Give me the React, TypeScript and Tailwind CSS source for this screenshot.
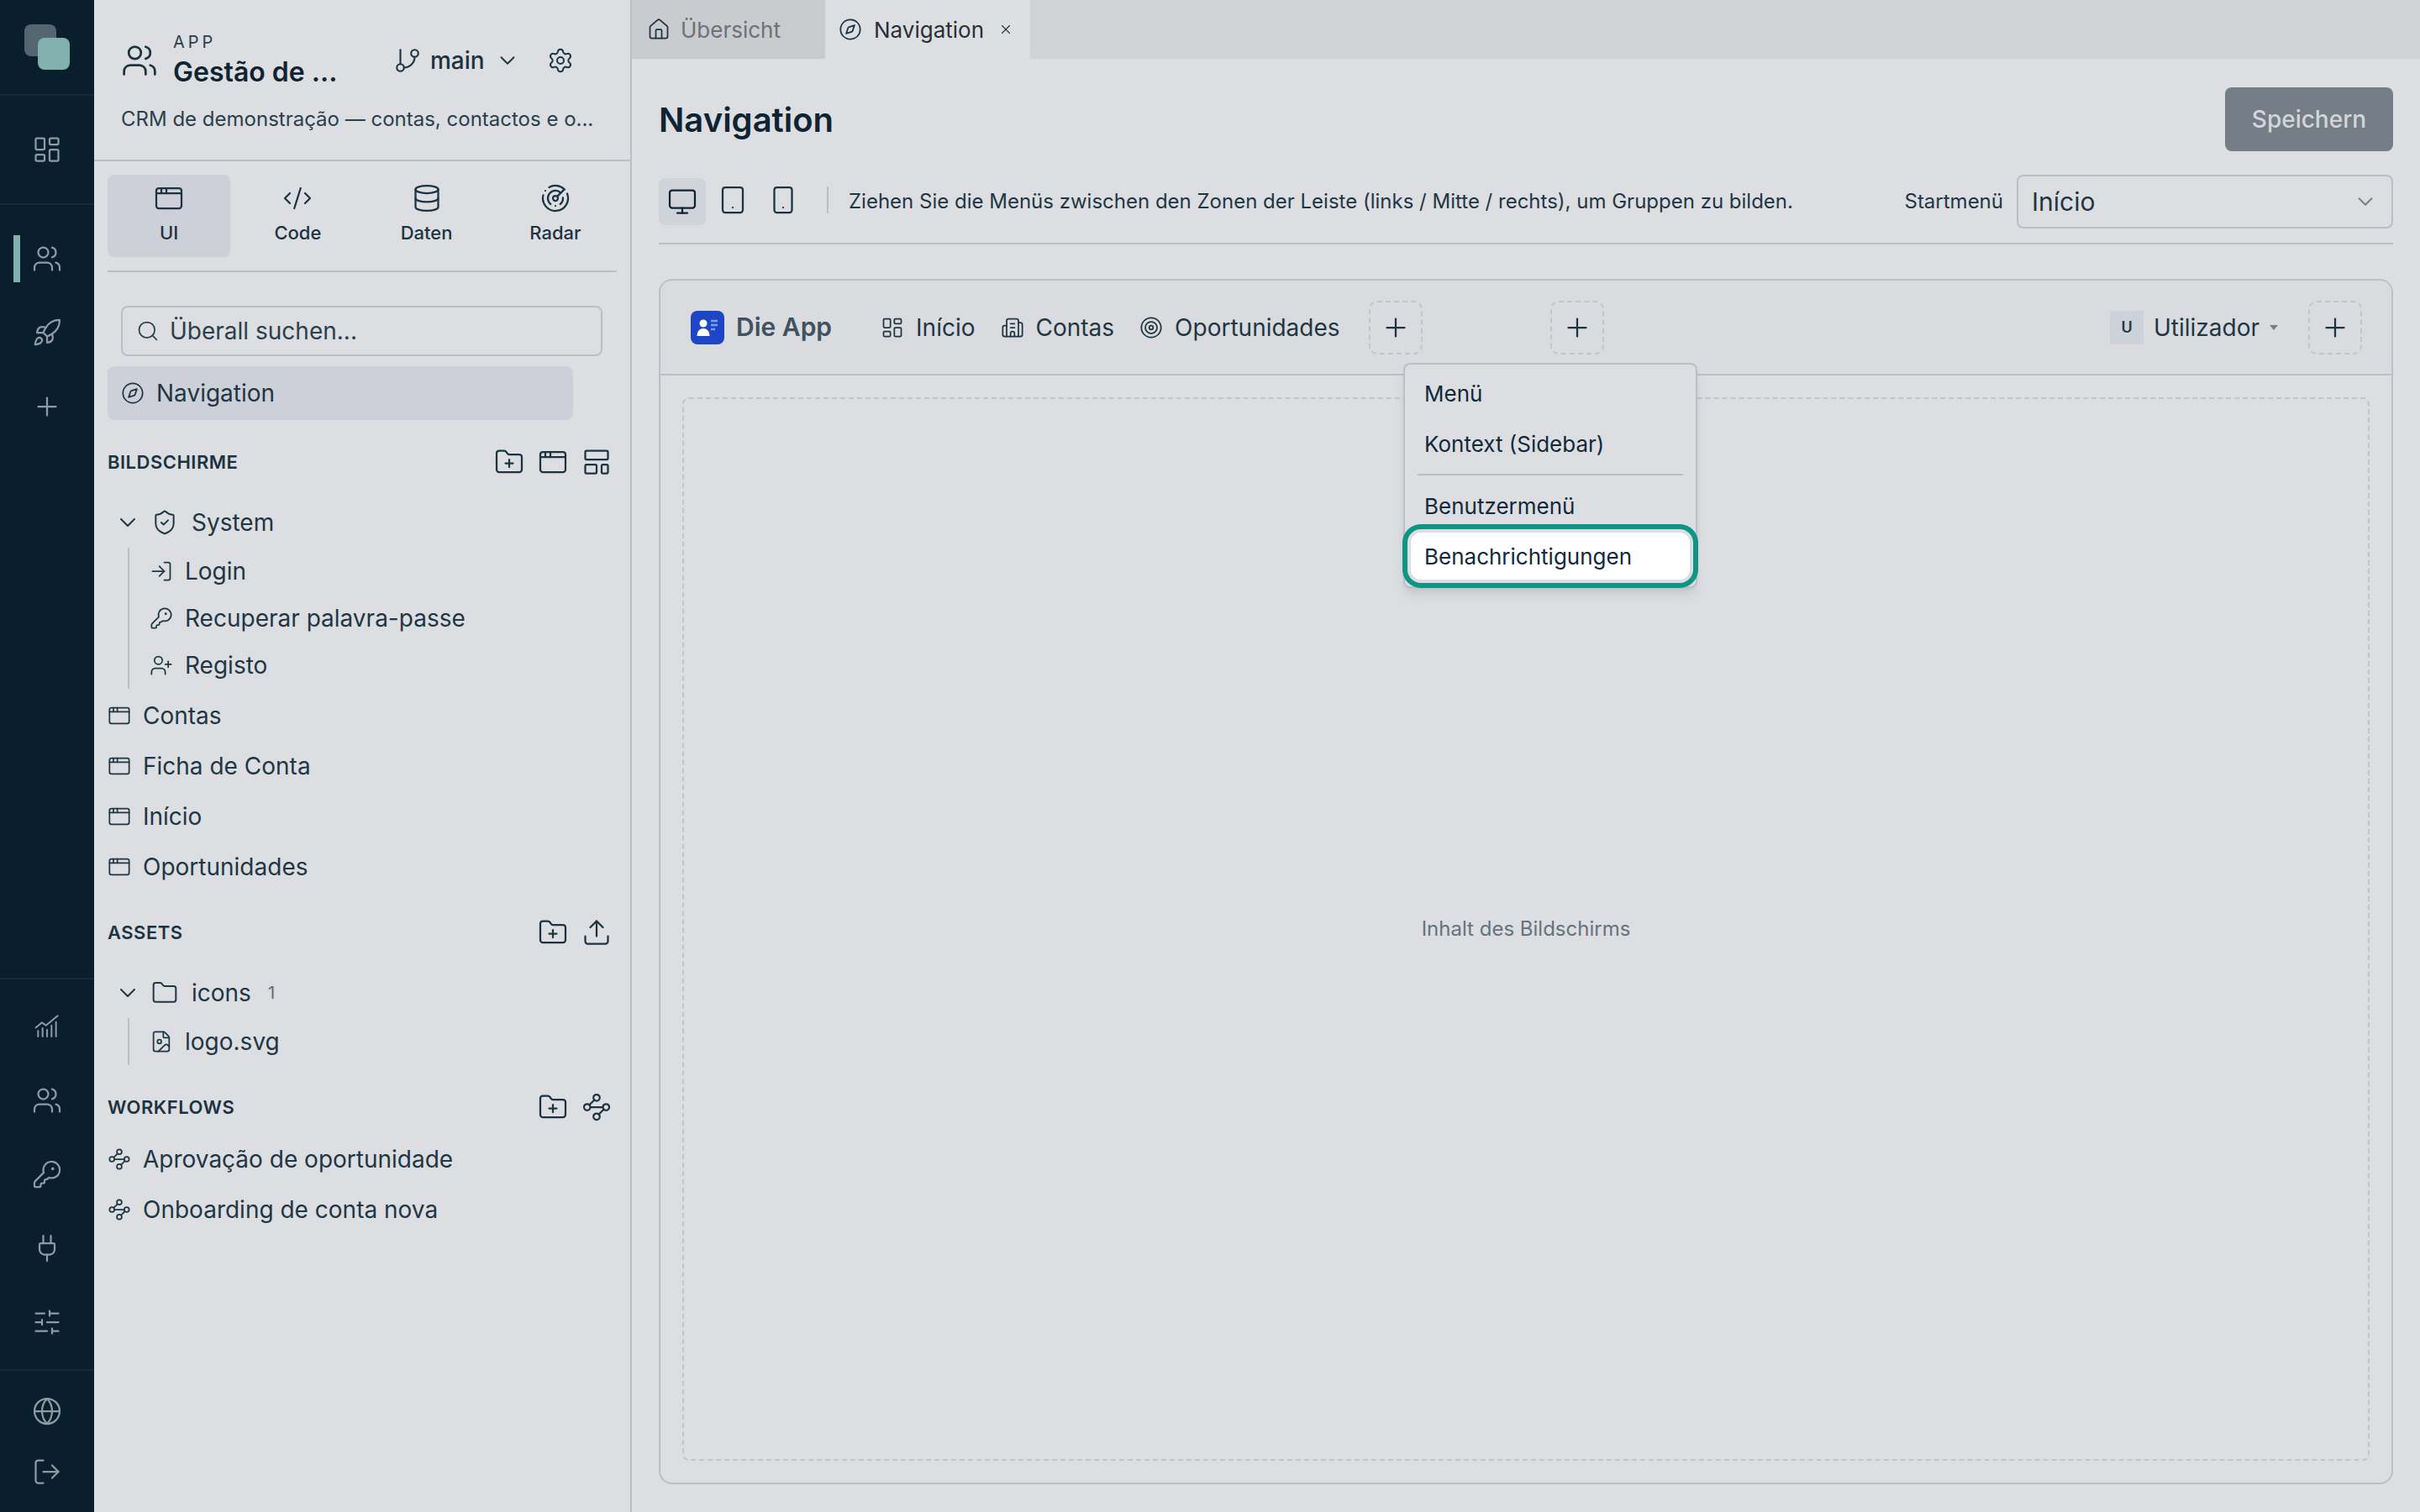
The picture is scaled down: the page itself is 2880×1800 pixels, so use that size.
import {
  AppWindow,
  Building2,
  ChevronDown,
  CodeXml,
  Compass,
  Database,
  FileImage,
  Folder,
  FolderPlus,
  GitBranch,
  Globe,
  House,
  KeyRound,
  LayoutDashboard,
  LayoutTemplate,
  LogIn,
  LogOut,
  Monitor,
  Plug,
  Plus,
  Radar,
  Rocket,
  Search,
  Settings,
  ShieldCheck,
  SlidersHorizontal,
  Smartphone,
  Tablet,
  Target,
  Upload,
  UserPlus,
  Users,
  Waypoints,
  X,
} from 'lucide-react';
import type { ReactNode } from 'react';

const RailItem = ({ children, className }: { children: ReactNode; className: string }) => (
  <div className={`flex items-center justify-center text-[#8f9aa2] ${className}`}>{children}</div>
);

const ChartIcon = () => (
  <svg width="32" height="32" viewBox="0 0 24 24" fill="none" stroke="currentColor" strokeWidth="1.5" strokeLinecap="round" strokeLinejoin="round">
    <path d="M2 13 L7.5 8.5 L11 11 L21.5 2.5" />
    <path d="M4 16v5M8 13.5V21M12 15v6M16 11v10M20 8v13" />
  </svg>
);

const Rail = () => (
  <aside className="w-[112px] shrink-0 h-full bg-[#0a1f2e] flex flex-col">
    <div className="h-[114px] shrink-0 border-b-2 border-[#152b39] pt-[29px] pl-[29px]">
      <div className="relative w-[53px] h-[54px]">
        <div className="w-[38px] h-[38px] rounded-[8px] bg-[#566670]" />
        <div className="absolute left-[16px] top-[16px] w-[38px] h-[38px] rounded-[8px] bg-[#82b1ad]" />
      </div>
    </div>
    <div className="h-[130px] shrink-0 border-b-2 border-[#152b39] flex items-center justify-center text-[#8f9aa2]">
      <LayoutDashboard size={36} strokeWidth={1.5} />
    </div>
    <div className="relative pt-[20px] flex flex-col">
      <div className="absolute left-[16px] top-[36px] w-[8px] h-[56px] bg-[#7fb2ae]" />
      <RailItem className="h-[88px]"><Users size={36} strokeWidth={1.5} /></RailItem>
      <RailItem className="h-[88px]"><Rocket size={36} strokeWidth={1.5} /></RailItem>
      <RailItem className="h-[88px]"><Plus size={36} strokeWidth={1.5} /></RailItem>
    </div>
    <div className="mt-auto border-t-2 border-[#152b39] pt-[12px] pb-[12px] flex flex-col">
      <RailItem className="h-[88px]"><ChartIcon /></RailItem>
      <RailItem className="h-[88px]"><Users size={36} strokeWidth={1.5} /></RailItem>
      <RailItem className="h-[88px]"><KeyRound size={36} strokeWidth={1.5} /></RailItem>
      <RailItem className="h-[88px]"><Plug size={36} strokeWidth={1.5} /></RailItem>
      <RailItem className="h-[88px]"><SlidersHorizontal size={36} strokeWidth={1.5} /></RailItem>
    </div>
    <div className="border-t-2 border-[#152b39] pt-[12px] pb-[12px] flex flex-col">
      <RailItem className="h-[72px]"><Globe size={36} strokeWidth={1.5} /></RailItem>
      <RailItem className="h-[72px]"><LogOut size={36} strokeWidth={1.5} /></RailItem>
    </div>
  </aside>
);

const SubTab = ({ icon, label, active }: { icon: ReactNode; label: string; active?: boolean }) => (
  <div className={`flex-1 h-[98px] rounded-[8px] flex flex-col items-center pt-[10px] gap-[8px] text-[#1c3342] ${active ? 'bg-[#cdd0d8]' : ''}`}>
    {icon}
    <span className="text-[22px] leading-[30px] font-medium">{label}</span>
  </div>
);

const SectionHead = ({ label, children }: { label: string; children: ReactNode }) => (
  <div className="h-[40px] pl-[16px] pr-[22px] flex items-center justify-between">
    <span className="text-[22px] font-semibold tracking-[0.5px] text-[#1c3342]">{label}</span>
    <div className="flex items-center gap-[16px] text-[#1c3342]">{children}</div>
  </div>
);

const TreeRow = ({ icon, label, className }: { icon: ReactNode; label: string; className: string }) => (
  <div className={`flex items-center gap-[14px] pl-[16px] text-[28px] text-[#1f3644] ${className}`}>
    {icon}
    <span>{label}</span>
  </div>
);

const SubRow = ({ icon, label }: { icon: ReactNode; label: string }) => (
  <div className="h-[56px] flex items-center gap-[14px] pl-[24px] text-[28px] text-[#1f3644]">
    {icon}
    <span>{label}</span>
  </div>
);

const Sidebar = () => (
  <aside className="w-[640px] shrink-0 h-full border-r-2 border-[#b9c1c8] bg-[#dcdee2] flex flex-col">
    <div className="h-[192px] shrink-0 border-b-2 border-[#b9c1c8] pl-[32px] pr-[32px]">
      <div className="flex items-center h-[116px] pt-[28px]">
        <Users size={44} strokeWidth={1.5} className="text-[#1c3342] shrink-0" />
        <div className="ml-[18px] w-[240px]">
          <div className="text-[20px] leading-[24px] tracking-[0.2em] text-[#2b3f4c]">APP</div>
          <div className="text-[32px] leading-[40px] font-semibold text-[#0f2433] mt-[4px]">Gestão de ...</div>
        </div>
        <GitBranch size={34} strokeWidth={1.5} className="text-[#1c3342] ml-[22px]" />
        <span className="ml-[10px] text-[28px] font-medium text-[#1c3342]">main</span>
        <ChevronDown size={30} strokeWidth={1.5} className="ml-[12px] text-[#1c3342]" />
        <Settings size={32} strokeWidth={1.5} className="ml-[32px] text-[#1c3342]" />
      </div>
      <div className="mt-[10px] text-[24px] leading-[32px] text-[#2b3f4c] whitespace-nowrap">
        CRM de demonstração — contas, contactos e o...
      </div>
    </div>
    <div className="mx-[16px] h-[132px] shrink-0 border-b-2 border-[#b9c1c8] pt-[16px]">
      <div className="flex gap-[7px]">
        <SubTab active icon={<AppWindow size={36} strokeWidth={1.5} />} label="UI" />
        <SubTab icon={<CodeXml size={36} strokeWidth={1.5} />} label="Code" />
        <SubTab icon={<Database size={36} strokeWidth={1.5} />} label="Daten" />
        <SubTab icon={<Radar size={36} strokeWidth={1.5} />} label="Radar" />
      </div>
    </div>
    <div className="mt-[40px] ml-[32px] w-[573px] h-[60px] rounded-[8px] border-2 border-[#b9c1c8] flex items-center pl-[16px] gap-[12px] text-[28px] text-[#2b3f4c]">
      <Search size={28} strokeWidth={1.5} />
      <span>Überall suchen...</span>
    </div>
    <div className="mt-[12px] ml-[16px] w-[554px] h-[64px] rounded-[8px] bg-[#cdd0d8] flex items-center pl-[16px] gap-[14px] text-[28px] text-[#1f3644]">
      <Compass size={28} strokeWidth={1.5} />
      <span>Navigation</span>
    </div>
    <div className="mt-[30px]">
      <SectionHead label="BILDSCHIRME">
        <FolderPlus size={36} strokeWidth={1.5} />
        <AppWindow size={36} strokeWidth={1.5} />
        <LayoutTemplate size={36} strokeWidth={1.5} />
      </SectionHead>
    </div>
    <div className="mt-[22px] h-[60px] flex items-center pl-[24px] text-[28px] text-[#1f3644]">
      <ChevronDown size={32} strokeWidth={1.5} />
      <ShieldCheck size={32} strokeWidth={1.5} className="ml-[12px]" />
      <span className="ml-[16px]">System</span>
    </div>
    <div className="ml-[40px] border-l-2 border-[#b9c1c8] h-[168px]">
      <SubRow icon={<LogIn size={28} strokeWidth={1.5} />} label="Login" />
      <SubRow icon={<KeyRound size={28} strokeWidth={1.5} />} label="Recuperar palavra-passe" />
      <SubRow icon={<UserPlus size={28} strokeWidth={1.5} />} label="Registo" />
    </div>
    <div className="mt-[2px]">
      <TreeRow className="h-[60px]" icon={<AppWindow size={28} strokeWidth={1.5} />} label="Contas" />
      <TreeRow className="h-[60px]" icon={<AppWindow size={28} strokeWidth={1.5} />} label="Ficha de Conta" />
      <TreeRow className="h-[60px]" icon={<AppWindow size={28} strokeWidth={1.5} />} label="Início" />
      <TreeRow className="h-[60px]" icon={<AppWindow size={28} strokeWidth={1.5} />} label="Oportunidades" />
    </div>
    <div className="mt-[28px]">
      <SectionHead label="ASSETS">
        <FolderPlus size={36} strokeWidth={1.5} />
        <Upload size={36} strokeWidth={1.5} />
      </SectionHead>
    </div>
    <div className="mt-[22px] h-[60px] flex items-center pl-[24px] text-[28px] text-[#1f3644]">
      <ChevronDown size={32} strokeWidth={1.5} />
      <Folder size={32} strokeWidth={1.5} className="ml-[12px]" />
      <span className="ml-[16px]">icons</span>
      <span className="ml-[20px] text-[20px] text-[#5b6b76]">1</span>
    </div>
    <div className="ml-[40px] border-l-2 border-[#b9c1c8] h-[56px]">
      <SubRow icon={<FileImage size={28} strokeWidth={1.5} />} label="logo.svg" />
    </div>
    <div className="mt-[30px]">
      <SectionHead label="WORKFLOWS">
        <FolderPlus size={36} strokeWidth={1.5} />
        <Waypoints size={36} strokeWidth={1.5} />
      </SectionHead>
    </div>
    <div className="mt-[12px]">
      <TreeRow className="h-[60px]" icon={<Waypoints size={28} strokeWidth={1.5} />} label="Aprovação de oportunidade" />
      <TreeRow className="h-[60px]" icon={<Waypoints size={28} strokeWidth={1.5} />} label="Onboarding de conta nova" />
    </div>
  </aside>
);

const DashedPlus = () => (
  <div className="w-[64px] h-[64px] shrink-0 rounded-[10px] border-2 border-dashed border-[#c0c5cb] flex items-center justify-center text-[#1c3342]">
    <Plus size={36} strokeWidth={1.5} />
  </div>
);

const MenuItem = ({ label }: { label: string }) => (
  <div className="h-[56px] px-[16px] flex items-center text-[26px] text-[#13293a]">{label}</div>
);

const AddMenu = () => (
  <div className="absolute left-[884px] top-[98px] w-[350px] h-[268px] rounded-[8px] border-2 border-[#b9c1c8] bg-[#dcdee2] shadow-lg px-[7px] pt-[6px]">
    <div className="flex flex-col gap-[4px]">
      <MenuItem label="Menü" />
      <MenuItem label="Kontext (Sidebar)" />
    </div>
    <div className="h-[2px] mx-[8px] my-[8px] bg-[#b9c1c8]" />
    <div className="flex flex-col gap-[4px]">
      <MenuItem label="Benutzermenü" />
      <div className="h-[56px] px-[16px] flex items-center text-[26px] text-[#13293a] rounded-[12px] bg-white shadow-[0_0_0_4px_#dcdee2,0_0_0_10px_#0e9586]">
        Benachrichtigungen
      </div>
    </div>
  </div>
);

const ContactIcon = () => (
  <div className="w-[40px] h-[40px] rounded-[8px] bg-[#1d45c4] flex items-center justify-center">
    <svg width="32" height="32" viewBox="0 0 32 32" fill="none">
      <circle cx="11" cy="11" r="4.5" fill="#ffffff" />
      <path d="M3.5 26c0-6 3.5-9 7.5-9s7.5 3 7.5 9z" fill="#ffffff" />
      <path d="M20 8h8M20 13h8M20 18h5" stroke="#7aa0ee" strokeWidth="2.4" />
    </svg>
  </div>
);

const NavEntry = ({ icon, label }: { icon: ReactNode; label: string }) => (
  <div className="flex items-center gap-[14px] text-[28px] text-[#1f3644]">
    {icon}
    <span>{label}</span>
  </div>
);

const Main = () => (
  <main className="flex-1 min-w-0 h-full bg-[#dcdee2] flex flex-col">
    <div className="h-[70px] shrink-0 bg-[#d1d3d7] flex">
      <div className="w-[230px] bg-[#c9cbcf] flex items-center pl-[18px] gap-[12px] text-[26px] text-[#6c7278]">
        <House size={28} strokeWidth={1.5} className="text-[#1c3342]" />
        <span>Übersicht</span>
      </div>
      <div className="w-[244px] bg-[#dcdee2] flex items-center pl-[16px] gap-[14px] text-[26px] text-[#2a2f35]">
        <Compass size={28} strokeWidth={1.5} className="text-[#1c3342]" />
        <span>Navigation</span>
        <X size={18} strokeWidth={1.5} className="ml-[3px]" />
      </div>
    </div>
    <div className="flex-1 flex flex-col pl-[32px] pr-[32px]">
      <div className="h-[110px] mt-[34px] flex items-start justify-between">
        <h1 className="text-[40px] leading-[78px] font-semibold text-[#0f2433]">Navigation</h1>
        <button className="w-[200px] h-[76px] rounded-[8px] bg-[#757e86] text-[#d3d6d9] text-[28px] font-medium">Speichern</button>
      </div>
      <div className="h-[83px] -mt-[6px] shrink-0 border-b-2 border-[#b9c1c8] flex items-start">
        <div className="flex items-center">
          <div className="w-[56px] h-[56px] mt-[4px] rounded-[8px] bg-[#d0d3da] flex items-center justify-center text-[#0f2433]">
            <Monitor size={36} strokeWidth={1.5} />
          </div>
          <Tablet size={36} strokeWidth={1.5} className="ml-[14px] text-[#1c3342]" />
          <Smartphone size={36} strokeWidth={1.5} className="ml-[24px] text-[#1c3342]" />
          <div className="w-[2px] h-[32px] bg-[#b9c1c8] ml-[34px]" />
        </div>
        <div className="h-[64px] flex items-center ml-[24px] text-[24px] text-[#1f3644]">
          Ziehen Sie die Menüs zwischen den Zonen der Leiste (links / Mitte / rechts), um Gruppen zu bilden.
        </div>
        <div className="ml-auto flex items-center">
          <span className="text-[24px] text-[#1f3644] mr-[16px]">Startmenü</span>
          <div className="w-[448px] h-[64px] rounded-[8px] border-2 border-[#b9c1c8] flex items-center justify-between pl-[16px] pr-[16px] text-[30px] text-[#1f3644]">
            <span>Início</span>
            <ChevronDown size={30} strokeWidth={1.5} className="text-[#757e86]" />
          </div>
        </div>
      </div>
      <div className="relative mt-[41px] mb-[33px] flex-1 rounded-[16px] border-2 border-[#b9c1c8] flex flex-col">
        <div className="h-[113px] shrink-0 rounded-t-[14px] bg-[#d9dbdf] border-b-2 border-[#b9c1c8] pl-[36px] pr-[35px] flex items-center">
          <div className="flex items-center gap-[14px] text-[30px] font-semibold text-[#3f525f]">
            <ContactIcon />
            <span>Die App</span>
          </div>
          <div className="flex items-center gap-[30px] ml-[58px]">
            <NavEntry icon={<LayoutDashboard size={28} strokeWidth={1.5} />} label="Início" />
            <NavEntry icon={<Building2 size={28} strokeWidth={1.5} />} label="Contas" />
            <NavEntry icon={<Target size={28} strokeWidth={1.5} />} label="Oportunidades" />
          </div>
          <div className="ml-[34px]"><DashedPlus /></div>
          <div className="ml-[152px]"><DashedPlus /></div>
          <div className="ml-auto flex items-center text-[28px] text-[#1f3644]">
            <div className="w-[40px] h-[40px] bg-[#cdd1d9] flex items-center justify-center text-[18px] font-semibold">U</div>
            <span className="ml-[12px]">Utilizador</span>
            <div className="ml-[12px] w-0 h-0 border-x-[5px] border-x-transparent border-t-[6px] border-t-[#757e86]" />
            <div className="ml-[36px]"><DashedPlus /></div>
          </div>
        </div>
        <div className="flex-1 m-[26px] rounded-[8px] border-2 border-dashed border-[#c0c5cb] flex items-center justify-center text-[24px] text-[#66727c]">
          Inhalt des Bildschirms
        </div>
        <AddMenu />
      </div>
    </div>
  </main>
);

export default function App() {
  return (
    <div className="w-[2880px] h-[1800px] flex overflow-hidden font-['Inter',sans-serif]">
      <Rail />
      <Sidebar />
      <Main />
    </div>
  );
}
